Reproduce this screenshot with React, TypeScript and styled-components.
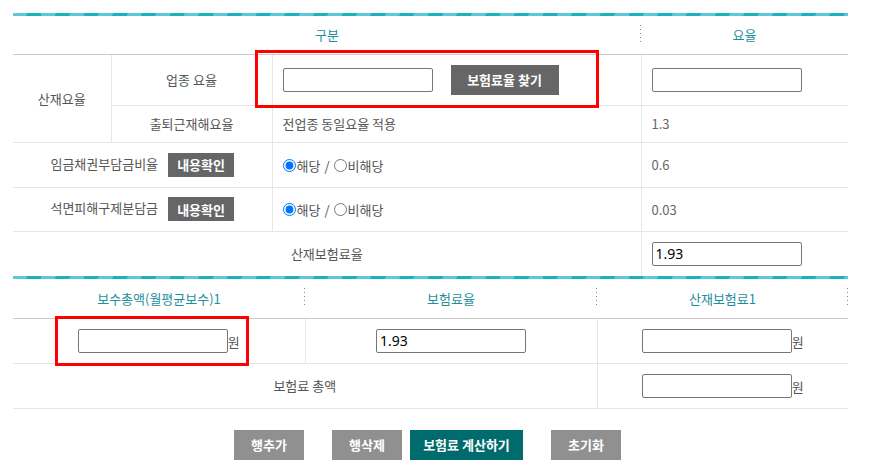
import React from 'react';
import styled, { createGlobalStyle } from 'styled-components';

const GlobalStyle = createGlobalStyle`
  body {
    margin: 0;
    background: #fff;
    font-family: "Noto Sans CJK KR", "Noto Sans", sans-serif;
  }
`;

const Page = styled.div`
  position: relative;
  padding: 13px 0 0 13px;
  width: 835px;
`;

const TealBar = styled.div`
  height: 3px;
  background: repeating-linear-gradient(
    115deg,
    #5ccad6 0 13px,
    #1ab2c0 13px 26px
  );
`;

const Grid = styled.table<{ $openBottom?: boolean }>`
  width: 835px;
  border-collapse: collapse;
  table-layout: fixed;
  border-left: hidden;
  border-right: hidden;
  border-top: hidden;
  ${({ $openBottom }) => ($openBottom ? 'border-bottom: hidden;' : '')}
`;

const Row = styled.tr<{ $h: number }>`
  height: ${({ $h }) => $h}px;
`;

const Head = styled.th<{ $divider?: boolean }>`
  position: relative;
  padding: 0;
  border: none;
  border-bottom: 1px solid #cccccc;
  font-size: 13px;
  font-weight: 400;
  color: #1f8f9b;
  text-align: center;

  &::after {
    content: '';
    display: ${({ $divider }) => ($divider ? 'block' : 'none')};
    position: absolute;
    right: 0;
    top: 9px;
    width: 1px;
    height: 18px;
    background: repeating-linear-gradient(to bottom, #888 0 1px, transparent 1px 4px);
  }
`;

const Cell = styled.td<{ $left?: boolean }>`
  border: 1px solid #e6e6e6;
  padding: 0 10px;
  font-size: 13px;
  color: #555;
  text-align: ${({ $left }) => ($left ? 'left' : 'center')};
  white-space: nowrap;
`;

const Value = styled.span`
  color: #666;
`;

const Field = styled.input`
  box-sizing: border-box;
  width: 150px;
  height: 24px;
  margin: 0;
  padding: 0 3px;
  border: 1px solid #767676;
  border-radius: 2px;
  font-family: "Noto Sans", "Noto Sans CJK KR", sans-serif;
  font-size: 14px;
  color: #000;
  vertical-align: middle;
`;

const Unit = styled.span`
  vertical-align: middle;
  color: #555;
`;

const DarkButton = styled.button<{ $w: number; $h: number }>`
  width: ${({ $w }) => $w}px;
  height: ${({ $h }) => $h}px;
  margin-left: 18px;
  padding: 0;
  border: none;
  background: #666666;
  color: #fff;
  font-family: "Noto Sans CJK KR", sans-serif;
  font-size: 13px;
  font-weight: 700;
  vertical-align: middle;
`;

const InfoButton = styled(DarkButton)`
  margin-left: 10px;
`;

const RadioLabel = styled.label`
  display: inline-flex;
  align-items: center;
  vertical-align: middle;

  & input {
    width: 13px;
    height: 13px;
    margin: 0 1px 0 0;
  }
`;

const Slash = styled.span`
  margin: 0 4px;
  vertical-align: middle;
`;

const ActionRow = styled.div`
  display: flex;
  justify-content: center;
  padding-right: 6px;
  margin-top: 21px;
`;

const Action = styled.button<{ $primary?: boolean; $w: number; $gap: number }>`
  width: ${({ $w }) => $w}px;
  height: 30px;
  margin-left: ${({ $gap }) => $gap}px;
  padding: 0;
  border: none;
  background: ${({ $primary }) => ($primary ? '#006b6d' : '#909090')};
  color: #fff;
  font-family: "Noto Sans CJK KR", sans-serif;
  font-size: 13px;
  font-weight: 700;
`;

const Highlight = styled.div<{ $x: number; $y: number; $w: number; $h: number }>`
  position: absolute;
  left: ${({ $x }) => $x}px;
  top: ${({ $y }) => $y}px;
  width: ${({ $w }) => $w}px;
  height: ${({ $h }) => $h}px;
  box-sizing: border-box;
  border: 3px solid #ff0000;
  pointer-events: none;
`;

function YesNo({ name }: { name: string }) {
  return (
    <>
      <RadioLabel>
        <input type="radio" name={name} defaultChecked />
        해당
      </RadioLabel>
      <Slash>/</Slash>
      <RadioLabel>
        <input type="radio" name={name} />
        비해당
      </RadioLabel>
    </>
  );
}

export default function App() {
  return (
    <Page>
      <GlobalStyle />
      <TealBar />
      <Grid $openBottom>
        <colgroup>
          <col style={{ width: 98 }} />
          <col style={{ width: 161 }} />
          <col style={{ width: 369 }} />
          <col style={{ width: 207 }} />
        </colgroup>
        <tbody>
          <Row $h={38}>
            <Head colSpan={3} $divider>
              구분
            </Head>
            <Head>요율</Head>
          </Row>
          <Row $h={51}>
            <Cell rowSpan={2}>산재요율</Cell>
            <Cell>업종 요율</Cell>
            <Cell $left>
              <Field />
              <DarkButton $w={108} $h={30}>
                보험료율 찾기
              </DarkButton>
            </Cell>
            <Cell $left>
              <Field />
            </Cell>
          </Row>
          <Row $h={37}>
            <Cell>출퇴근재해요율</Cell>
            <Cell $left>전업종 동일요율 적용</Cell>
            <Cell $left>
              <Value>1.3</Value>
            </Cell>
          </Row>
          <Row $h={45}>
            <Cell colSpan={2}>
              임금채권부담금비율
              <InfoButton $w={66} $h={24}>
                내용확인
              </InfoButton>
            </Cell>
            <Cell $left>
              <YesNo name="wage" />
            </Cell>
            <Cell $left>
              <Value>0.6</Value>
            </Cell>
          </Row>
          <Row $h={44}>
            <Cell colSpan={2}>
              석면피해구제분담금
              <InfoButton $w={66} $h={24}>
                내용확인
              </InfoButton>
            </Cell>
            <Cell $left>
              <YesNo name="asbestos" />
            </Cell>
            <Cell $left>
              <Value>0.03</Value>
            </Cell>
          </Row>
          <Row $h={45}>
            <Cell colSpan={3}>산재보험료율</Cell>
            <Cell $left>
              <Field defaultValue="1.93" />
            </Cell>
          </Row>
        </tbody>
      </Grid>

      <TealBar />
      <Grid>
        <colgroup>
          <col style={{ width: 292 }} />
          <col style={{ width: 292 }} />
          <col style={{ width: 251 }} />
        </colgroup>
        <tbody>
          <Row $h={39}>
            <Head $divider>보수총액(월평균보수)1</Head>
            <Head $divider>보험료율</Head>
            <Head $divider>산재보험료1</Head>
          </Row>
          <Row $h={45}>
            <Cell>
              <Field />
              <Unit>원</Unit>
            </Cell>
            <Cell>
              <Field defaultValue="1.93" />
            </Cell>
            <Cell>
              <Field />
              <Unit>원</Unit>
            </Cell>
          </Row>
          <Row $h={45}>
            <Cell colSpan={2}>보험료 총액</Cell>
            <Cell>
              <Field />
              <Unit>원</Unit>
            </Cell>
          </Row>
        </tbody>
      </Grid>

      <ActionRow>
        <Action $w={70} $gap={0}>행추가</Action>
        <Action $w={70} $gap={28}>행삭제</Action>
        <Action $w={113} $gap={8} $primary>
          보험료 계산하기
        </Action>
        <Action $w={70} $gap={28}>초기화</Action>
      </ActionRow>

      <Highlight $x={255} $y={50} $w={344} $h={58} />
      <Highlight $x={55} $y={316} $w={194} $h={50} />
    </Page>
  );
}
